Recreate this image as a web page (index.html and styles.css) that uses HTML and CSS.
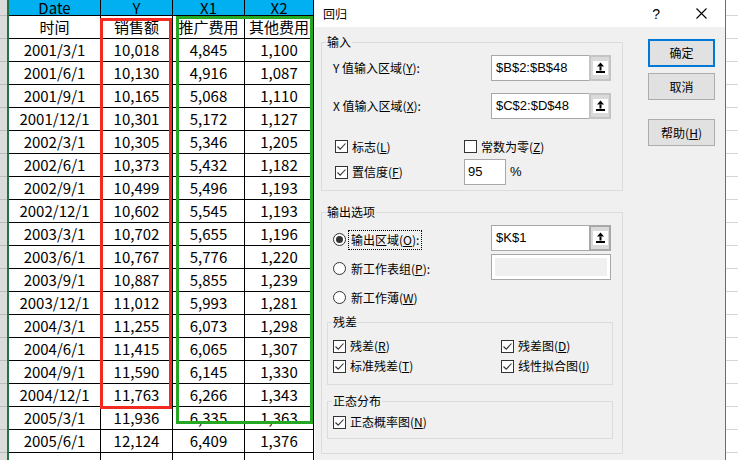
FILE: index.html
```html
<!DOCTYPE html>
<html lang="zh-CN">
<head>
<meta charset="utf-8">
<title>回归</title>
<link rel="stylesheet" href="styles.css">
</head>
<body>
<div class="screen">
  <div class="rowhead"></div>

  <div class="sheet">
    <div class="rows">
      <div class="row hdr"><div>Date</div><div>Y</div><div>X1</div><div>X2</div></div>
      <div class="row"><div>时间</div><div>销售额</div><div>推广费用</div><div>其他费用</div></div>
      <div class="row"><div>2001/3/1</div><div>10,018</div><div>4,845</div><div>1,100</div></div>
      <div class="row"><div>2001/6/1</div><div>10,130</div><div>4,916</div><div>1,087</div></div>
      <div class="row"><div>2001/9/1</div><div>10,165</div><div>5,068</div><div>1,110</div></div>
      <div class="row"><div>2001/12/1</div><div>10,301</div><div>5,172</div><div>1,127</div></div>
      <div class="row"><div>2002/3/1</div><div>10,305</div><div>5,346</div><div>1,205</div></div>
      <div class="row"><div>2002/6/1</div><div>10,373</div><div>5,432</div><div>1,182</div></div>
      <div class="row"><div>2002/9/1</div><div>10,499</div><div>5,496</div><div>1,193</div></div>
      <div class="row"><div>2002/12/1</div><div>10,602</div><div>5,545</div><div>1,193</div></div>
      <div class="row"><div>2003/3/1</div><div>10,702</div><div>5,655</div><div>1,196</div></div>
      <div class="row"><div>2003/6/1</div><div>10,767</div><div>5,776</div><div>1,220</div></div>
      <div class="row"><div>2003/9/1</div><div>10,887</div><div>5,855</div><div>1,239</div></div>
      <div class="row"><div>2003/12/1</div><div>11,012</div><div>5,993</div><div>1,281</div></div>
      <div class="row"><div>2004/3/1</div><div>11,255</div><div>6,073</div><div>1,298</div></div>
      <div class="row"><div>2004/6/1</div><div>11,415</div><div>6,065</div><div>1,307</div></div>
      <div class="row"><div>2004/9/1</div><div>11,590</div><div>6,145</div><div>1,330</div></div>
      <div class="row"><div>2004/12/1</div><div>11,763</div><div>6,266</div><div>1,343</div></div>
      <div class="row"><div>2005/3/1</div><div>11,936</div><div>6,335</div><div>1,363</div></div>
      <div class="row"><div>2005/6/1</div><div>12,124</div><div>6,409</div><div>1,376</div></div>
      <div class="row"><div></div><div></div><div></div><div></div></div>
    </div>
    <div class="mark mark-red"></div>
    <div class="mark mark-green"></div>
  </div>

  <div class="dialog">
    <div class="titlebar">
      <span class="title">回归</span>
      <span class="help">?</span>
      <svg class="close" width="11" height="11" viewBox="0 0 11 11"><path d="M0.5 0.5 L10.5 10.5 M10.5 0.5 L0.5 10.5" stroke="#000" stroke-width="1.1" fill="none"/></svg>
    </div>
    <div class="dbody">
      <div class="groups">
        <fieldset class="grp grp-in">
          <legend>输入</legend>
          <div class="in-body">
            <div class="field-row">
              <span class="lbl">Y 值输入区域(<u>Y</u>):</span>
              <div class="refbox"><span class="reftext">$B$2:$B$48</span><span class="refbtn"><svg width="15" height="14" viewBox="0 0 15 14"><rect width="15" height="14" fill="#fff"/><path d="M7.5 1.5 L11 5.5 L4 5.5 Z" fill="#000"/><rect x="6.5" y="5.5" width="2" height="4" fill="#000"/><rect x="3" y="10" width="9" height="2" fill="#000"/></svg></span></div>
            </div>
            <div class="field-row second">
              <span class="lbl">X 值输入区域(<u>X</u>):</span>
              <div class="refbox"><span class="reftext">$C$2:$D$48</span><span class="refbtn"><svg width="15" height="14" viewBox="0 0 15 14"><rect width="15" height="14" fill="#fff"/><path d="M7.5 1.5 L11 5.5 L4 5.5 Z" fill="#000"/><rect x="6.5" y="5.5" width="2" height="4" fill="#000"/><rect x="3" y="10" width="9" height="2" fill="#000"/></svg></span></div>
            </div>
            <div class="chk-row r1">
              <label class="opt"><span class="cb on"><svg width="11" height="11" viewBox="0 0 11 11"><path d="M1.5 5.5 L4.2 8.2 L9.5 2.5" stroke="#333" stroke-width="1.1" fill="none"/></svg></span>标志(<u>L</u>)</label>
              <label class="opt"><span class="cb"></span>常数为零(<u>Z</u>)</label>
            </div>
            <div class="chk-row r2">
              <label class="opt"><span class="cb on"><svg width="11" height="11" viewBox="0 0 11 11"><path d="M1.5 5.5 L4.2 8.2 L9.5 2.5" stroke="#333" stroke-width="1.1" fill="none"/></svg></span>置信度(<u>F</u>)</label>
              <span class="conf"><span class="numbox">95</span><span class="pct">%</span></span>
            </div>
          </div>
        </fieldset>

        <fieldset class="grp grp-out">
          <legend>输出选项</legend>
          <div class="out-body">
            <div class="radio-row">
              <label class="ropt"><span class="rb on"></span><span class="focus">输出区域(<u>O</u>):</span></label>
              <div class="refbox active"><span class="reftext">$K$1</span><span class="refbtn"><svg width="15" height="14" viewBox="0 0 15 14"><rect width="15" height="14" fill="#fff"/><path d="M7.5 1.5 L11 5.5 L4 5.5 Z" fill="#000"/><rect x="6.5" y="5.5" width="2" height="4" fill="#000"/><rect x="3" y="10" width="9" height="2" fill="#000"/></svg></span></div>
            </div>
            <div class="radio-row">
              <label class="ropt"><span class="rb"></span><span class="plain">新工作表组(<u>P</u>):</span></label>
              <div class="disbox"><span class="disfill"></span></div>
            </div>
            <div class="radio-row">
              <label class="ropt"><span class="rb"></span><span class="plain">新工作薄(<u>W</u>)</span></label>
            </div>

            <fieldset class="grp sub sub-res">
              <legend>残差</legend>
              <div class="sub-body">
                <div class="res-row">
                  <label class="opt"><span class="cb on"><svg width="11" height="11" viewBox="0 0 11 11"><path d="M1.5 5.5 L4.2 8.2 L9.5 2.5" stroke="#333" stroke-width="1.1" fill="none"/></svg></span>残差(<u>R</u>)</label>
                  <label class="opt"><span class="cb on"><svg width="11" height="11" viewBox="0 0 11 11"><path d="M1.5 5.5 L4.2 8.2 L9.5 2.5" stroke="#333" stroke-width="1.1" fill="none"/></svg></span>残差图(<u>D</u>)</label>
                </div>
                <div class="res-row">
                  <label class="opt"><span class="cb on"><svg width="11" height="11" viewBox="0 0 11 11"><path d="M1.5 5.5 L4.2 8.2 L9.5 2.5" stroke="#333" stroke-width="1.1" fill="none"/></svg></span>标准残差(<u>T</u>)</label>
                  <label class="opt"><span class="cb on"><svg width="11" height="11" viewBox="0 0 11 11"><path d="M1.5 5.5 L4.2 8.2 L9.5 2.5" stroke="#333" stroke-width="1.1" fill="none"/></svg></span>线性拟合图(<u>I</u>)</label>
                </div>
              </div>
            </fieldset>

            <fieldset class="grp sub sub-norm">
              <legend>正态分布</legend>
              <div class="sub-body norm-body">
                <div class="res-row">
                  <label class="opt"><span class="cb on"><svg width="11" height="11" viewBox="0 0 11 11"><path d="M1.5 5.5 L4.2 8.2 L9.5 2.5" stroke="#333" stroke-width="1.1" fill="none"/></svg></span>正态概率图(<u>N</u>)</label>
                </div>
              </div>
            </fieldset>
          </div>
        </fieldset>
      </div>

      <div class="buttons">
        <button class="btn primary">确定</button>
        <button class="btn cancel">取消</button>
        <button class="btn helpbtn">帮助(<u>H</u>)</button>
      </div>
    </div>
  </div>

  <div class="sheet-right"></div>
</div>
</body>
</html>
```

FILE: styles.css
```css
* { box-sizing: border-box; }
html, body { margin: 0; padding: 0; }
body {
  width: 738px;
  height: 460px;
  overflow: hidden;
  background: #fff;
  font-family: "Noto Sans CJK SC", "Noto Sans", sans-serif;
  color: #000;
}
.screen {
  display: flex;
  height: 460px;
  overflow: hidden;
}

/* row header strip */
.rowhead {
  flex: none;
  width: 9px;
  height: 460px;
  border-right: 2px solid #217346;
  background: repeating-linear-gradient(to bottom, #dcdcdc 0, #dcdcdc 22px, #bcbcbc 22px, #bcbcbc 23px);
  background-position: 0 -7px;
}

/* spreadsheet */
.sheet {
  flex: none;
  width: 306px;
  height: 460px;
  position: relative;
  overflow: hidden;
}
.row {
  display: grid;
  grid-template-columns: 92px 72px 72px 69px;
  height: 23px;
}
.row > div {
  border-right: 1px solid #000;
  border-bottom: 1px solid #000;
  text-align: center;
  font-size: 15px;
  line-height: 22px;
  white-space: nowrap;
  overflow: hidden;
}
.row.hdr { height: 16px; }
.row.hdr > div {
  background: #00b0f0;
  line-height: 15px;
}

.mark {
  position: absolute;
  border-style: solid;
  border-width: 3px;
}
.mark-red {
  left: 91px;
  top: 18px;
  width: 72px;
  height: 391px;
  border-color: #f32a1f;
}
.mark-green {
  left: 167px;
  top: 16px;
  width: 137px;
  height: 408px;
  border-color: #24a824;
}

/* dialog */
.dialog {
  flex: none;
  width: 411px;
  height: 460px;
  background: #f0f0f0;
  border-right: 1px solid #2b7bd2;
  font-size: 12px;
  line-height: 16px;
}
.titlebar {
  height: 27px;
  background: #fff;
  display: flex;
  align-items: center;
  padding-left: 8px;
}
.title { font-size: 12px; }
.help {
  margin-left: auto;
  font-size: 14px;
  font-family: "Liberation Sans", sans-serif;
}
.close {
  margin-left: 36px;
  margin-right: 18px;
}
.dbody {
  display: flex;
  padding: 7px 0 0 6px;
}
.groups { width: 302px; flex: none; }

fieldset.grp {
  margin: 0;
  padding: 0;
  border: 1px solid #dcdcdc;
  min-width: 0;
}
fieldset.grp > legend {
  margin-left: 4px;
  padding: 0 1px;
  font-size: 12px;
  line-height: 16px;
}

/* input group */
.in-body { padding: 5px 11px 5px 10px; }
.field-row {
  display: grid;
  grid-template-columns: 159px 120px;
  align-items: center;
  height: 26px;
}
.field-row .lbl { padding-left: 1px; }
.field-row.second { margin-top: 12px; }

.refbox {
  display: flex;
  height: 26px;
  width: 120px;
  border: 1px solid #a8a8a8;
  background: #fff;
}
.reftext {
  flex: 1;
  padding-left: 4px;
  font-size: 13px;
  line-height: 24px;
  font-family: "Liberation Sans", sans-serif;
}
.refbtn {
  flex: none;
  width: 22px;
  margin: -1px -1px -1px 0;
  border: 2px solid #c4c4c4;
  background: #dadada;
  display: flex;
  align-items: center;
  justify-content: center;
}
.refbox.active .refbtn { border-color: #a8a8a8; }

.chk-row {
  display: grid;
  grid-template-columns: 129px auto;
  align-items: center;
  padding-left: 3px;
}
.chk-row.r1 { margin-top: 15px; height: 25px; }
.chk-row.r2 { height: 26px; }

.opt {
  display: flex;
  align-items: center;
  white-space: nowrap;
}
.cb {
  flex: none;
  width: 13px;
  height: 13px;
  border: 1px solid #333;
  background: #fff;
  margin-right: 4px;
  display: flex;
  align-items: center;
  justify-content: center;
}
.conf { display: flex; align-items: center; }
.numbox {
  width: 42px;
  height: 26px;
  border: 1px solid #a8a8a8;
  background: #fff;
  padding-left: 3px;
  font-size: 13px;
  line-height: 24px;
  font-family: "Liberation Sans", sans-serif;
}
.pct {
  margin-left: 4px;
  font-size: 13px;
  font-family: "Liberation Sans", sans-serif;
}

/* output group */
.grp-out { margin-top: 13px !important; }
.out-body { padding: 5px 9px 14px 5px; }
.radio-row {
  display: grid;
  grid-template-columns: 158px 120px;
  align-items: center;
  height: 26px;
  margin-top: 3px;
  padding-left: 6px;
}
.radio-row:first-child { margin-top: 0; }
.ropt {
  display: flex;
  align-items: center;
  padding-top: 3px;
  white-space: nowrap;
}
.rb {
  flex: none;
  width: 13px;
  height: 13px;
  border: 1px solid #333;
  border-radius: 50%;
  background: #fff;
  margin-right: 2px;
  display: flex;
  align-items: center;
  justify-content: center;
}
.rb.on::after {
  content: "";
  width: 7px;
  height: 7px;
  border-radius: 50%;
  background: #333;
}
.focus {
  border: 1px dotted #000;
  padding: 1px 2px;
}
.plain { padding-left: 3px; }
.disbox {
  width: 120px;
  height: 26px;
  border: 1px solid #a8a8a8;
  background: #fff;
  padding: 3px;
}
.disfill {
  display: block;
  height: 100%;
  background: #f0f0f0;
}

.sub { margin-top: 5px !important; }
.sub-norm { margin-top: 8px !important; }
.sub-body { padding: 6px 0 8px 5px; }
.norm-body { padding: 3px 0 6px 5px; }
.res-row {
  display: grid;
  grid-template-columns: 168px auto;
  align-items: center;
  height: 20px;
}

/* buttons */
.buttons {
  flex: none;
  margin-left: 25px;
  margin-top: 5px;
  display: flex;
  flex-direction: column;
  width: 67px;
}
.btn {
  width: 67px;
  height: 27px;
  border: 1px solid #adadad;
  background: #e1e1e1;
  font-family: inherit;
  font-size: 12px;
  line-height: 16px;
  color: #000;
  padding: 0;
}
.btn.primary {
  height: 28px;
  border: 2px solid #0078d7;
}
.btn.cancel { margin-top: 6px; }
.btn.helpbtn { margin-top: 19px; }

/* sheet to the right of the dialog */
.sheet-right {
  flex: 1;
  height: 460px;
  background: repeating-linear-gradient(to bottom, #fff 0, #fff 22px, #d4d4d4 22px, #d4d4d4 23px);
  background-position: 0 -7px;
}
```
